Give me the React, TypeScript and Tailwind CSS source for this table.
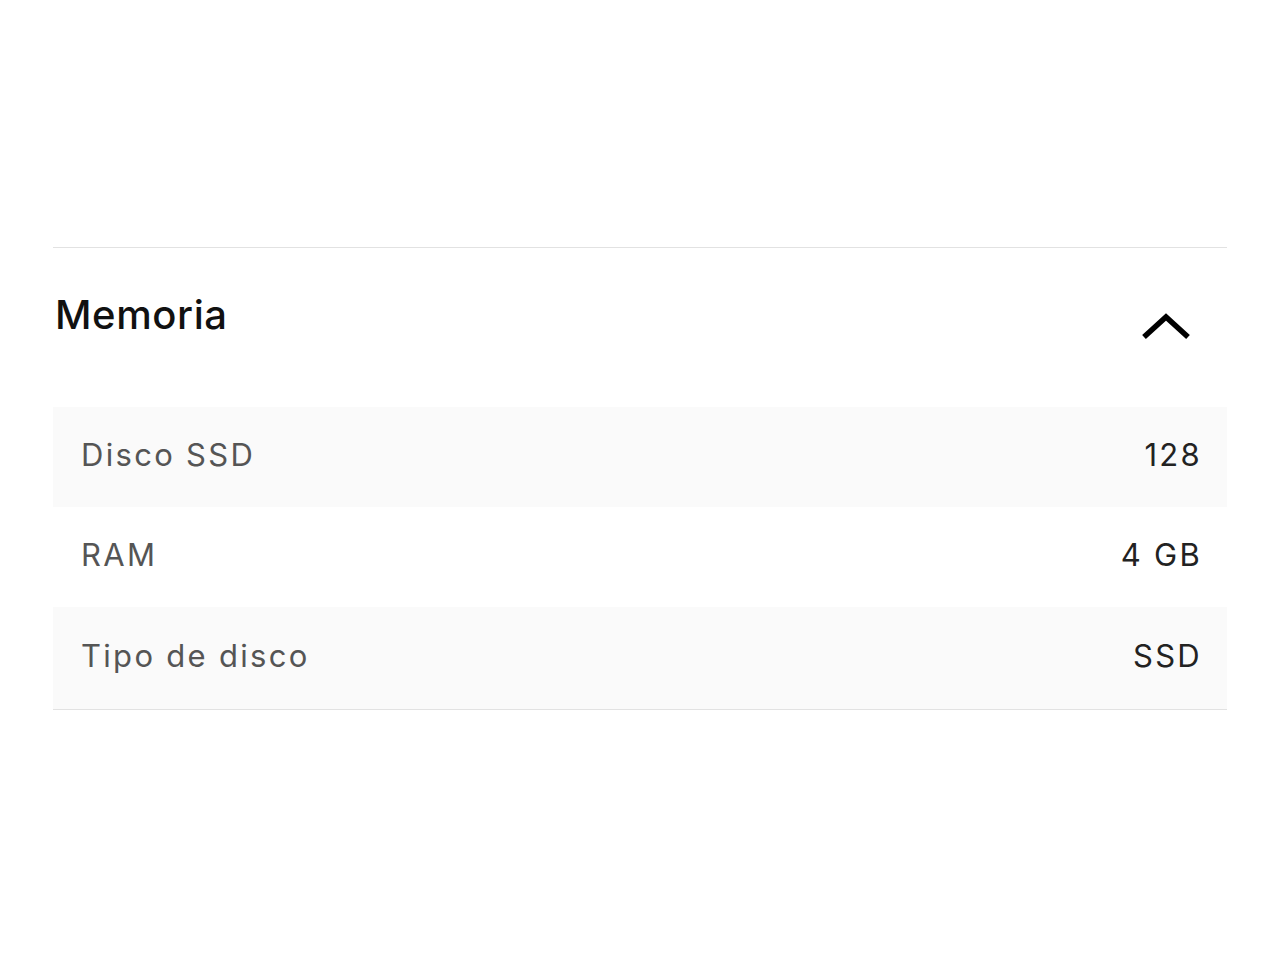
export default function App() {
  const rows = [
    { label: 'Disco SSD', value: '128', shaded: true },
    { label: 'RAM', value: '4 GB', shaded: false },
    { label: 'Tipo de disco', value: 'SSD', shaded: true },
  ]

  return (
    <div className="min-h-screen bg-white pt-[247px] px-[53px] font-['Inter',sans-serif]">
      <div className="border-t border-b border-[#e2e2e2]">
        <div className="flex items-start justify-between pt-[43px] pb-[67px] pl-[2px] pr-[36px]">
          <h2 className="text-[40px] leading-[48px] font-medium text-[#111] tracking-[0.6px]">Memoria</h2>
          <svg className="mt-[22px]" width="50" height="27" viewBox="0 0 50 27" fill="none">
            <path d="M3 24 L25 4 L47 24" stroke="#000" strokeWidth="5.5" strokeLinejoin="miter" />
          </svg>
        </div>
        <div>
          {rows.map((row, i) => (
            <div
              key={i}
              className={`flex items-center justify-between pl-[28px] pr-[25px] pb-[3px] ${i === 2 ? 'h-[102px]' : 'h-[100px]'} ${row.shaded ? 'bg-[#fafafa]' : 'bg-white'}`}
            >
              <span className="text-[31px] tracking-[2.3px] text-[#555]">{row.label}</span>
              <span className="text-[31px] tracking-[2.3px] text-[#222]">{row.value}</span>
            </div>
          ))}
        </div>
      </div>
    </div>
  )
}
